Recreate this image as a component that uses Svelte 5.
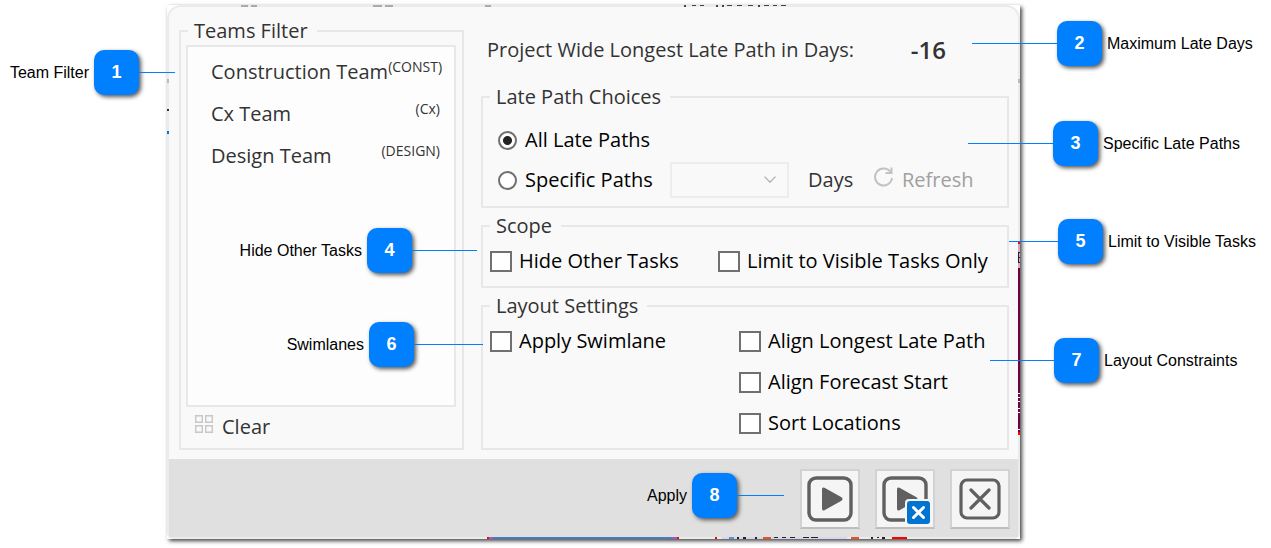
<script lang="ts">
  const teams = [
    { name: 'Construction Team', code: '(CONST)' },
    { name: 'Cx Team', code: '(Cx)' },
    { name: 'Design Team', code: '(DESIGN)' }
  ];

  // pins with the label before the badge end at x from the left,
  // pins with the label after the badge start at x from the right
  const leftPins = [
    { n: 1, label: 'Team Filter', x: 175, y: 50, line: 36 },
    { n: 4, label: 'Hide Other Tasks', x: 477, y: 228, line: 65 },
    { n: 6, label: 'Swimlanes', x: 483, y: 322, line: 69 }
  ];
  const rightPins = [
    { n: 2, label: 'Maximum Late Days', x: 299, y: 21, line: 85 },
    { n: 3, label: 'Specific Late Paths', x: 303, y: 121, line: 85 },
    { n: 5, label: 'Limit to Visible Tasks', x: 262, y: 219, line: 49 },
    { n: 7, label: 'Layout Constraints', x: 281, y: 338, line: 64 }
  ];

  let mode = $state('all');
  let days = $state('');
  let hideOther = $state(false);
  let limitVisible = $state(false);
  let swimlane = $state(false);
  let alignLongest = $state(false);
  let alignForecast = $state(false);
  let sortLocations = $state(false);
</script>

<main class="stage">
  <div class="frame">
    <section class="dialog">
      <div class="body">
        <fieldset class="teams">
          <legend>Teams Filter</legend>
          <ul class="team-list">
            {#each teams as team}
              <li><span>{team.name}</span><small>{team.code}</small></li>
            {/each}
          </ul>
          <button class="plain clear" type="button">
            <svg width="18" height="18" viewBox="0 0 18 18" fill="none" stroke="#c8c8c8" stroke-width="1.4">
              <path d="M.7.7h6.6v6.6H.7zM10.7.7h6.6v6.6h-6.6zM.7 10.7h6.6v6.6H.7zM10.7 10.7h6.6v6.6h-6.6z" />
            </svg>
            <span>Clear</span>
          </button>
        </fieldset>

        <div class="options">
          <div class="summary">
            <span>Project Wide Longest Late Path in Days:</span>
            <strong>-16</strong>
          </div>

          <fieldset class="paths">
            <legend>Late Path Choices</legend>
            <div class="row">
              <label><input type="radio" name="mode" value="all" bind:group={mode} />All Late Paths</label>
            </div>
            <div class="row">
              <label class="specific"><input type="radio" name="mode" value="specific" bind:group={mode} />Specific Paths</label>
              <div class="select">
                <select id="days" bind:value={days} disabled={mode === 'all'}>
                  <option value=""></option>
                </select>
                <svg width="12" height="7" viewBox="0 0 12 7" fill="none" stroke="#aaa" stroke-width="1.2"><path d="M.5.7 6 6.2 11.5.7" /></svg>
              </div>
              <label class="unit" for="days">Days</label>
              <button class="plain refresh" type="button" disabled={mode === 'all'}>
                <svg width="20" height="20" viewBox="0 0 20 20" fill="none" stroke="#c2c2c2" stroke-width="2">
                  <path d="M18 11A8.500 8.500 0 1 1 16.800 5.500M17.500.5v5.500h-6" />
                </svg>
                <span>Refresh</span>
              </button>
            </div>
          </fieldset>

          <fieldset class="checks scope">
            <legend>Scope</legend>
            <label><input type="checkbox" bind:checked={hideOther} />Hide Other Tasks</label>
            <label><input type="checkbox" bind:checked={limitVisible} />Limit to Visible Tasks Only</label>
          </fieldset>

          <fieldset class="checks layout">
            <legend>Layout Settings</legend>
            <label><input type="checkbox" bind:checked={swimlane} />Apply Swimlane</label>
            <div class="stack">
              <label><input type="checkbox" bind:checked={alignLongest} />Align Longest Late Path</label>
              <label><input type="checkbox" bind:checked={alignForecast} />Align Forecast Start</label>
              <label><input type="checkbox" bind:checked={sortLocations} />Sort Locations</label>
            </div>
          </fieldset>
        </div>
      </div>

      <footer>
        <button class="tool" type="button" aria-label="Apply">
          <svg width="46" height="46" viewBox="0 0 46 46">
            <rect x="2" y="2" width="42" height="42" rx="7" fill="none" stroke="#606060" stroke-width="3.4" />
            <path d="M15 13.500v19q0 3 2.500 1.700l17-9.500q2-1.700 0-3.400l-17-9.500q-2.500-1.300-2.500 1.700z" fill="#606060" />
          </svg>
        </button>
        <button class="tool" type="button" aria-label="Apply and close">
          <svg width="50" height="50" viewBox="0 0 50 50">
            <rect x="4" y="4" width="42" height="42" rx="7" fill="none" stroke="#606060" stroke-width="3.4" />
            <path d="M17 15.500v19q0 3 2.500 1.700l17-9.500q2-1.700 0-3.400l-17-9.500q-2.500-1.300-2.500 1.700z" fill="#606060" />
            <path d="M25 50V29q0-4 4-4h21v25z" fill="#f5f5f5" />
            <rect x="27" y="27" width="23" height="23" rx="3" fill="#0173d1" />
            <path d="m33.500 33.500 10 10m0-10-10 10" stroke="#fff" stroke-width="3" stroke-linecap="round" />
          </svg>
        </button>
        <button class="tool" type="button" aria-label="Close">
          <svg width="42" height="42" viewBox="0 0 42 42" fill="none" stroke="#606060" stroke-width="3.2" stroke-linecap="round">
            <rect x="2" y="2" width="38" height="38" rx="6" />
            <path d="m12 12 18 18m0-18-18 18" />
          </svg>
        </button>
      </footer>
    </section>

    <!-- slivers of the chart behind the dialog -->
    <svg class="sliver top" width="853" height="2" viewBox="0 0 853 2" fill="#aaa">
      <path d="M74 0h7v2h-7zM84 0h6v2h-6zM206 0h9v2h-9zM218 0h8v2h-8zM318 0h6v2h-6z" />
      <path fill="#444" d="M517 0h2v2h-2zM525 0h4v1h-4zM533 0h4v1h-4zM549 0h2v2h-2zM555 0h2v2h-2zM560 0h5v1h-5zM570 0h5v1h-5zM581 0h5v1h-5zM591 0h2v2h-2zM597 0h5v1h-5zM606 0h4v1h-4zM614 0h5v1h-5z" />
    </svg>
    <svg class="sliver left" width="2" height="534" viewBox="0 0 2 534">
      <path fill="#bbb" d="M0 74h2v4H0z" />
      <path fill="#333" d="M0 104h2v2H0z" />
      <path fill="#0078d4" d="M0 126h2v3H0z" />
    </svg>
    <svg class="sliver side" width="2" height="534" viewBox="0 0 2 534">
      <path fill="#bbb" d="M0 74h2v4H0z" />
      <path fill="#f00" d="M0 237h2v2H0zM0 427h2v3H0z" />
      <path fill="#d4a9c6" d="M0 239h2v24H0z" />
      <path fill="#222" d="M0 247h2v1H0zM0 252h2v1H0zM0 257h2v1H0zM0 247h1v11H0z" />
      <path fill="#700040" d="M0 263h2v164H0z" />
      <path fill="#fff" d="M0 388h2v1H0zM0 392h2v1H0zM0 396h2v1H0zM0 403h2v1H0zM0 407h2v1H0zM0 424h2v1H0z" />
    </svg>
    <svg class="sliver bottom" width="853" height="2" viewBox="0 0 853 2">
      <path fill="#447ec0" d="M326 0h180v2H326z" />
      <path fill="#8a62c8" d="M322 0h5v2h-5zM504 0h6v2h-6z" />
      <path fill="#d9d5ee" d="M555 0h125v2H555z" />
      <path fill="#f00" d="M320 0h2v2h-2zM510 0h2v2h-2zM548 0h2v2h-2zM725 0h15v2h-15z" />
      <path fill="#e8531f" d="M596 0h8v2h-8zM684 0h8v2h-8z" />
      <path fill="#5b8fdc" d="M562 0h5v2h-5z" />
      <path fill="#222" d="M570 0h2v2h-2zM576 0h3v2h-3zM588 0h2v2h-2zM607 0h4v1h-4zM615 0h4v1h-4zM623 0h5v1h-5zM636 0h6v1h-6zM644 0h7v1h-7zM704 0h2v2h-2zM710 0h2v1h-2zM715 0h3v2h-3z" />
    </svg>
  </div>

  {#each leftPins as pin}
    <div class="pin before" style="left: {pin.x}px; top: {pin.y}px">
      <span>{pin.label}</span><b>{pin.n}</b><i style="width: {pin.line}px"></i>
    </div>
  {/each}
  {#each rightPins as pin}
    <div class="pin after" style="right: {pin.x}px; top: {pin.y}px">
      <i style="width: {pin.line}px"></i><b>{pin.n}</b><span>{pin.label}</span>
    </div>
  {/each}
  <div class="pin before apply">
    <span>Apply</span><b>8</b><i></i>
  </div>
</main>

<style>
  :global(body) {
    background: #fff;
  }

  .stage {
    position: relative;
    padding: 5px 251px 9px 167px;
    overflow: hidden;
    font: 20px/26px 'Segoe UI', 'Open Sans', 'Noto Sans', sans-serif;
    color: #333;
  }

  .frame {
    position: relative;
    background: #fff;
    box-shadow: 2px 2px 4px #444;
  }

  .dialog {
    border: 2px solid #ebebeb;
    border-radius: 14px 14px 6px 6px;
    background: #f9f9f9;
  }

  .body {
    display: grid;
    grid-template-columns: 285px 1fr;
    gap: 17px;
    padding: 0 9px 9px 10px;
  }

  fieldset {
    min-width: 0;
    margin: 0;
    padding: 0 7px;
    border: 2px solid #e8e8e8;
  }

  legend {
    padding: 0 9px 0 6px;
    line-height: 26px;
  }

  label {
    display: flex;
    align-items: center;
    gap: 7px;
    min-height: 28px;
    color: #000;
    white-space: nowrap;
  }

  .teams {
    display: flex;
    flex-direction: column;
    margin-top: 11px;
    padding: 1px 6px 0 5px;
  }

  .team-list {
    flex: 1;
    box-sizing: border-box;
    min-height: 362px;
    margin: 0;
    padding: 4px 14px 0 23px;
    border: 2px solid #e8e8e8;
    background: #fdfdfd;
    list-style: none;
  }

  .teams legend {
    margin-left: 2px;
  }

  .team-list li {
    display: flex;
    justify-content: space-between;
    height: 42px;
    line-height: 42px;
    white-space: nowrap;
  }

  small {
    font-size: 14px;
    line-height: 32px;
  }

  .plain {
    display: flex;
    align-items: center;
    padding: 0;
    border: 0;
    background: none;
    font: inherit;
    color: inherit;
  }

  .clear {
    gap: 9px;
    height: 41px;
    padding: 0 0 2px 9px;
  }

  .clear svg,
  .refresh svg {
    margin-bottom: 6px;
  }

  .summary {
    display: flex;
    align-items: center;
    justify-content: space-between;
    box-sizing: border-box;
    height: 77px;
    padding: 8px 63px 0 6px;
    white-space: nowrap;
  }

  strong {
    font-size: 24px;
    font-weight: 600;
  }

  .options fieldset + fieldset {
    margin-top: 5px;
  }

  .paths {
    padding: 12px 7px 8px;
  }

  .paths label {
    gap: 8px;
  }

  .row {
    display: flex;
    align-items: center;
    height: 36px;
  }

  .row + .row {
    margin-top: 4px;
  }

  input {
    appearance: none;
    box-sizing: border-box;
    flex: none;
    margin: 0;
    border: 2px solid #707070;
    background: #fff;
  }

  input[type='radio'] {
    width: 19px;
    height: 19px;
    margin-left: 8px;
    border-radius: 50%;
  }

  input[type='radio']:checked {
    background: radial-gradient(circle, #222 4px, #fff 5px);
  }

  input[type='checkbox'] {
    width: 22px;
    height: 21px;
  }

  input[type='checkbox']:checked {
    background: #707070;
  }

  .specific {
    width: 180px;
  }

  .select {
    position: relative;
    width: 119px;
    height: 36px;
  }

  select {
    appearance: none;
    width: 100%;
    height: 100%;
    padding: 0 30px 0 8px;
    border: 2px solid #e8e8e8;
    border-radius: 0;
    background: #f9f9f9;
    font: inherit;
  }

  .select svg {
    position: absolute;
    top: 14px;
    right: 13px;
    pointer-events: none;
  }

  .unit {
    width: 66px;
    margin-left: 19px;
    color: #333;
  }

  .refresh {
    gap: 8px;
    color: #a0a0a0;
  }

  .checks {
    display: grid;
    grid-template-columns: 228px 1fr;
    align-items: start;
    padding: 8px 7px 11px;
  }

  .layout {
    grid-template-columns: 249px 1fr;
  }

  .stack {
    display: grid;
    gap: 13px;
  }

  footer {
    display: flex;
    justify-content: flex-end;
    align-items: center;
    gap: 15px;
    height: 78px;
    padding-right: 8px;
    background: #e0e0e0;
  }

  .tool {
    display: grid;
    place-items: center;
    width: 60px;
    height: 60px;
    margin-top: 2px;
    padding: 0;
    border: 2px solid #d2d2d2;
    border-bottom-color: #bdbdbd;
    background: #f5f5f5;
  }

  .sliver {
    position: absolute;
  }

  .top,
  .left {
    top: 0;
    left: 0;
  }

  .side {
    top: 0;
    right: 0;
  }

  .bottom {
    bottom: 0;
    left: 0;
  }

  .pin {
    position: absolute;
    display: flex;
    align-items: center;
    width: 0;
    font: 16px/20px 'Liberation Sans', Arial, sans-serif;
    color: #000;
    white-space: nowrap;
  }

  .before {
    justify-content: flex-end;
  }

  .apply {
    right: 487px;
    top: 473px;
  }

  .apply i {
    width: 47px;
  }

  .pin b {
    flex: none;
    width: 45px;
    border-radius: 10px;
    background: #0080ff;
    box-shadow: 2px 2px 4px #555;
    font-size: 18px;
    line-height: 45px;
    text-align: center;
    color: #fff;
  }

  .pin i {
    flex: none;
    height: 1px;
    background: #0080ff;
  }

  .pin span {
    margin: 0 5px;
  }
</style>
